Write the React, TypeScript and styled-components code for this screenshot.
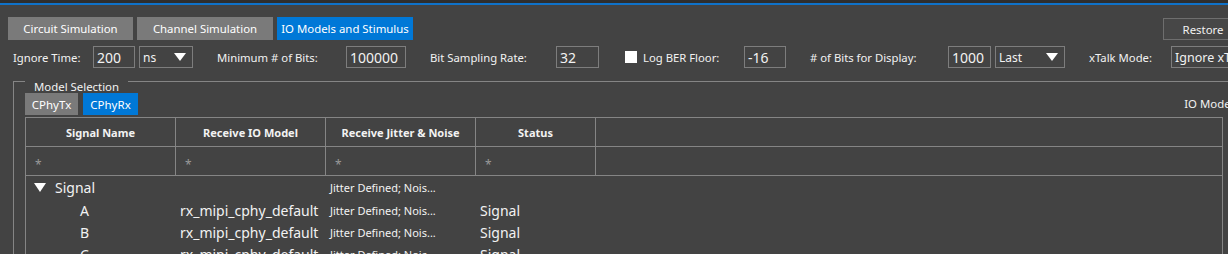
import React from 'react'
import styled, { createGlobalStyle } from 'styled-components'

const GlobalStyle = createGlobalStyle`
  html, body {
    margin: 0;
    padding: 0;
    background: #434343;
    overflow: hidden;
  }
  body {
    font-family: "Noto Sans", "Open Sans", sans-serif;
    color: #f2f2f2;
  }
`

const Page = styled.div`
  width: 1228px;
  height: 254px;
  overflow: hidden;
  background: #434343;
`

const TopStrip = styled.div`
  height: 3px;
  background: #2e2e2e;
  border-bottom: 2px solid #0f72c9;
`

const TabBar = styled.div`
  display: flex;
  align-items: flex-start;
  gap: 4px;
  padding: 12px 0 0 8px;
  height: 23px;
`

const Tab = styled.div<{ $active?: boolean; $w: number }>`
  width: ${p => p.$w}px;
  height: 23px;
  flex-shrink: 0;
  display: flex;
  align-items: center;
  justify-content: center;
  font-size: 11.4px;
  background: ${p => (p.$active ? '#0078d7' : '#7a7a7a')};
  color: #fff;
  white-space: nowrap;
`

const RestoreButton = styled.div`
  margin-left: auto;
  margin-right: -15px;
  margin-top: 1px;
  width: 78px;
  height: 20px;
  border: 1px solid #6e6e6e;
  background: #474747;
  display: flex;
  align-items: center;
  justify-content: center;
  font-size: 11.4px;
  flex-shrink: 0;
`

const OptionRow = styled.div`
  display: flex;
  align-items: center;
  padding: 6px 0 0 13px;
  height: 22px;
  white-space: nowrap;
`

const Label = styled.span<{ $w: number }>`
  width: ${p => p.$w}px;
  flex-shrink: 0;
  font-size: 11.3px;
`

const Field = styled.div<{ $w: number; $gap?: number; $size?: number }>`
  box-sizing: border-box;
  width: ${p => p.$w}px;
  height: 22px;
  flex-shrink: 0;
  border: 1px solid #7d7d7d;
  padding: 0 3px;
  display: flex;
  align-items: center;
  font-size: ${p => p.$size ?? 14}px;
  margin-right: ${p => p.$gap ?? 24}px;
  overflow: hidden;
  white-space: nowrap;
`

const Select = styled(Field)`
  justify-content: space-between;
  font-size: 12px;
  padding-right: 6px;
`

const Caret = () => (
  <svg width="12" height="8" viewBox="0 0 12 8">
    <polygon points="0,0 12,0 6,8" fill="#fff" />
  </svg>
)

const Checkbox = styled.span`
  width: 12px;
  height: 12px;
  background: #fff;
  flex-shrink: 0;
  margin-right: 6px;
`

const GroupBox = styled.div`
  margin: 13px 0 0 13px;
  width: 1245px;
  height: 200px;
  border-left: 1px solid #858585;
  box-sizing: border-box;
`

const GroupTitle = styled.div`
  display: flex;
  align-items: flex-start;
  height: 12px;
  &::before {
    content: '';
    width: 11px;
    border-top: 1px solid #858585;
  }
  &::after {
    content: '';
    flex: 1;
    border-top: 1px solid #858585;
  }
  span {
    font-size: 11.4px;
    line-height: 12px;
    padding: 0 9px;
  }
`

const SubTabBar = styled.div`
  display: flex;
  align-items: flex-start;
  gap: 5px;
  padding: 0 0 0 11px;
  height: 24px;
`

const SubTab = styled(Tab)`
  height: 22px;
  font-size: 11.5px;
`

const SideLabel = styled.span`
  margin-left: auto;
  margin-right: 19px;
  font-size: 11.4px;
  line-height: 16px;
  padding-top: 3px;
`

const Table = styled.div`
  margin-left: 11px;
  width: 1198px;
  height: 160px;
  border: 1px solid #858585;
  border-bottom: none;
  box-sizing: border-box;
`

const GridRow = styled.div<{ $h: number }>`
  display: grid;
  grid-template-columns: 150px 150px 150px 120px 1fr;
  height: ${p => p.$h}px;
  border-bottom: 1px solid #858585;
`

const HeadCell = styled.div`
  border-right: 1px solid #858585;
  display: flex;
  align-items: center;
  justify-content: center;
  font-size: 11px;
  font-weight: 700;
  &:last-child {
    border-right: none;
  }
`

const FilterCell = styled.div`
  border-right: 1px solid #858585;
  color: #9a9a9a;
  font-size: 12px;
  padding: 9px 0 0 9px;
  &:last-child {
    border-right: none;
  }
`

const TreeRow = styled.div<{ $h: number }>`
  display: grid;
  grid-template-columns: 150px 150px 150px 120px 1fr;
  height: ${p => p.$h}px;
  align-items: center;
  white-space: nowrap;
`

const Cell = styled.div<{ $indent?: number; $small?: boolean }>`
  padding-left: ${p => p.$indent ?? 4}px;
  font-size: ${p => (p.$small ? 11 : 14)}px;
  display: flex;
  align-items: center;
  overflow: hidden;
`

const Toggle = () => (
  <svg width="12" height="9" viewBox="0 0 12 9" style={{ marginRight: 9 }}>
    <polygon points="0,0 12,0 6,9" fill="#fff" />
  </svg>
)

const rows = ['A', 'B', 'C']

export default function App() {
  return (
    <Page>
      <GlobalStyle />
      <TopStrip />
      <TabBar>
        <Tab $w={125}>Circuit Simulation</Tab>
        <Tab $w={136}>Channel Simulation</Tab>
        <Tab $w={136} $active>IO Models and Stimulus</Tab>
        <RestoreButton>Restore</RestoreButton>
      </TabBar>
      <OptionRow>
        <Label $w={80}>Ignore Time:</Label>
        <Field $w={42} $gap={4}>200</Field>
        <Select $w={54}>ns<Caret /></Select>
        <Label $w={129}>Minimum # of Bits:</Label>
        <Field $w={60}>100000</Field>
        <Label $w={126}>Bit Sampling Rate:</Label>
        <Field $w={43} $gap={26}>32</Field>
        <Checkbox />
        <Label $w={101}>Log BER Floor:</Label>
        <Field $w={42}>-16</Field>
        <Label $w={138}># of Bits for Display:</Label>
        <Field $w={43} $gap={4}>1000</Field>
        <Select $w={70}>Last<Caret /></Select>
        <Label $w={82}>xTalk Mode:</Label>
        <Field $w={110} $size={12.5}>Ignore xTalk</Field>
      </OptionRow>
      <GroupBox>
        <GroupTitle><span>Model Selection</span></GroupTitle>
        <SubTabBar>
          <SubTab $w={53}>CPhyTx</SubTab>
          <SubTab $w={55} $active>CPhyRx</SubTab>
          <SideLabel>IO Models</SideLabel>
        </SubTabBar>
        <Table>
          <GridRow $h={28}>
            <HeadCell>Signal Name</HeadCell>
            <HeadCell>Receive IO Model</HeadCell>
            <HeadCell>Receive Jitter &amp; Noise</HeadCell>
            <HeadCell>Status</HeadCell>
            <HeadCell />
          </GridRow>
          <GridRow $h={28}>
            <FilterCell>*</FilterCell>
            <FilterCell>*</FilterCell>
            <FilterCell>*</FilterCell>
            <FilterCell>*</FilterCell>
            <FilterCell />
          </GridRow>
          <TreeRow $h={23}>
            <Cell $indent={8}><Toggle />Signal</Cell>
            <Cell />
            <Cell $small>Jitter Defined; Nois...</Cell>
            <Cell />
            <Cell />
          </TreeRow>
          {rows.map(r => (
            <TreeRow $h={22} key={r}>
              <Cell $indent={54}>{r}</Cell>
              <Cell>rx_mipi_cphy_default</Cell>
              <Cell $small>Jitter Defined; Nois...</Cell>
              <Cell>Signal</Cell>
              <Cell />
            </TreeRow>
          ))}
        </Table>
      </GroupBox>
    </Page>
  )
}
